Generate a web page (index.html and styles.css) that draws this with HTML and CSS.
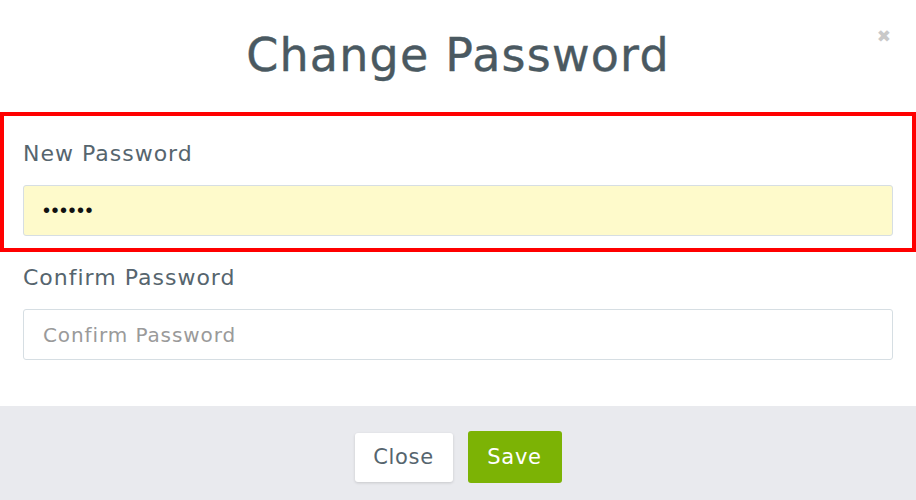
FILE: index.html
```html
<!DOCTYPE html>
<html>
<head>
<meta charset="utf-8">
<link rel="stylesheet" href="styles.css">
</head>
<body>
<div class="modal">
  <div class="modal-header">
    <h1 class="title">Change Password</h1>
    <span class="close-x">&#x2716;</span>
  </div>
  <div class="modal-body">
    <div class="group highlighted">
      <label class="label">New Password</label>
      <div class="input filled">&#8226;&#8226;&#8226;&#8226;&#8226;&#8226;</div>
    </div>
    <div class="group">
      <label class="label">Confirm Password</label>
      <div class="input placeholder">Confirm Password</div>
    </div>
  </div>
  <div class="modal-footer">
    <button class="btn btn-close">Close</button>
    <button class="btn btn-save">Save</button>
  </div>
</div>
</body>
</html>
```
FILE: styles.css
```css
html, body {
  margin: 0;
  padding: 0;
  background: #ffffff;
}
body {
  font-family: "DejaVu Sans", "Open Sans", sans-serif;
  width: 916px;
  height: 500px;
  overflow: hidden;
}
.modal {
  display: flex;
  flex-direction: column;
  height: 500px;
}
.modal-header {
  position: relative;
  height: 112px;
  display: flex;
  justify-content: center;
  align-items: flex-start;
}
.title {
  margin: 22px 0 0 0;
  font-size: 46px;
  font-weight: normal;
  color: #4a5961;
  line-height: 66px;
  letter-spacing: 1.2px;
  -webkit-text-stroke: 0.4px #4a5961;
}
.close-x {
  position: absolute;
  right: 25px;
  top: 26px;
  font-size: 17px;
  color: #c9c9c9;
  font-family: "DejaVu Sans", sans-serif;
}
.modal-body {
  flex: 1;
  display: flex;
  flex-direction: column;
}
.group {
  display: flex;
  flex-direction: column;
  padding: 0 23px;
}
.group.highlighted {
  border: 4px solid #ff0000;
  padding: 20px 19px 12px 19px;
}
.label {
  font-size: 22px;
  color: #56656e;
  line-height: 36px;
  margin-bottom: 13px;
  letter-spacing: 1px;
}
.group + .group .label {
  margin-top: 8px;
}
.input {
  height: 49px;
  border: 1px solid #d6dee3;
  border-radius: 3px;
  display: flex;
  align-items: center;
  padding-left: 19px;
  font-size: 20px;
  letter-spacing: 0.9px;
}
.input.filled {
  background: #fefacb;
  color: #111;
  font-size: 20px;
  letter-spacing: 1.5px;
  font-family: "Liberation Sans", sans-serif;
}
.input.placeholder {
  color: #9a9a9a;
  background: #fff;
}
.modal-footer {
  height: 94px;
  box-sizing: border-box;
  background: #e9eaee;
  display: flex;
  justify-content: center;
  align-items: center;
  gap: 15px;
  padding-top: 8px;
}
.btn {
  font-family: inherit;
  font-size: 21px;
  border: none;
  border-radius: 3px;
  cursor: pointer;
  letter-spacing: 0.7px;
  padding: 0;
}
.btn-close {
  width: 98px;
  height: 49px;
  background: #ffffff;
  color: #56656e;
  box-shadow: 0 1px 3px rgba(0,0,0,0.15);
}
.btn-save {
  width: 94px;
  height: 52px;
  background: #7cb305;
  color: #ffffff;
}
```
